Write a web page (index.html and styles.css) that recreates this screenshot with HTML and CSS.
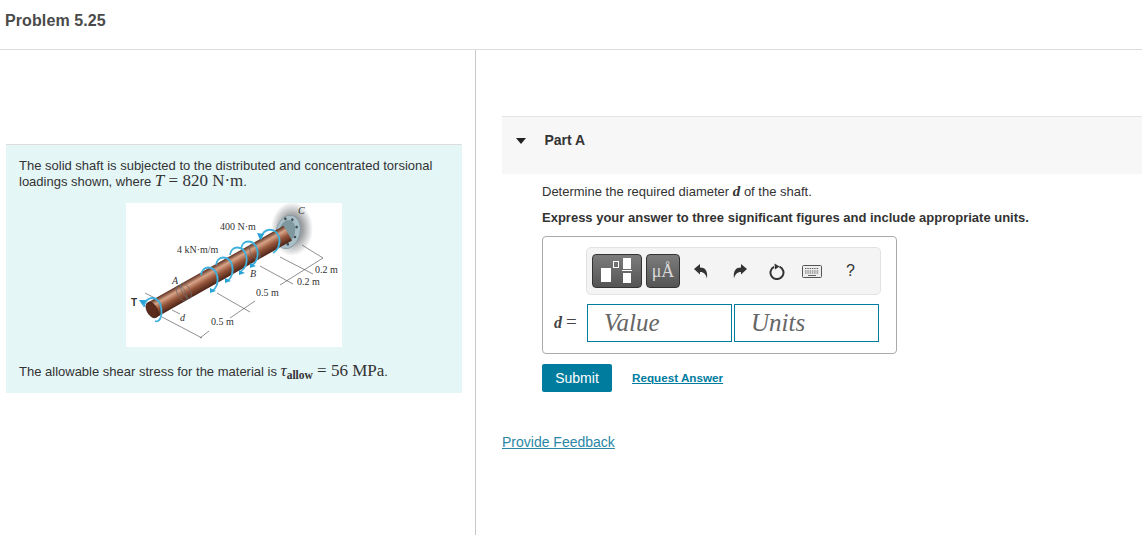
FILE: index.html
```html
<!DOCTYPE html>
<html lang="en">
<head>
<meta charset="utf-8">
<title>Problem 5.25</title>
<link rel="stylesheet" href="styles.css">
</head>
<body>
<header class="top"><h1 class="title">Problem 5.25</h1></header>
<main class="main">
  <section class="left">
    <div class="panel">
      <p class="intro">The solid shaft is subjected to the distributed and concentrated torsional loadings shown, where <span class="math"><i>T</i> = 820 N·m</span>.</p>
      <svg class="figure" width="216" height="144" viewBox="0 0 216 144">
        <defs>
          <linearGradient id="steel" x1="0" y1="0" x2="0" y2="1">
            <stop offset="0" stop-color="#5d2f20"/>
            <stop offset="0.28" stop-color="#d8a488"/>
            <stop offset="0.6" stop-color="#96553a"/>
            <stop offset="1" stop-color="#4b2317"/>
          </linearGradient>
          <radialGradient id="wall">
            <stop offset="0.5" stop-color="#9c9fa1"/>
            <stop offset="1" stop-color="#ffffff"/>
          </radialGradient>
          <path id="ring" d="M-8 -5C-7 -15 5 -15 8 -5C10 3 7 9 3 11"/>
        </defs>
        <ellipse cx="166" cy="26" rx="21" ry="27" fill="url(#wall)"/>
        <g transform="rotate(15 162 29)">
          <ellipse cx="162" cy="29" rx="12" ry="17" fill="#a9bfc8" stroke="#7d939c" stroke-width="0.7"/>
          <ellipse cx="161" cy="29" rx="8" ry="12" fill="#7f979f"/>
          <circle cx="163" cy="16" r="1.300" fill="#3d4a50"/>
          <circle cx="169" cy="22" r="1.300" fill="#3d4a50"/>
          <circle cx="170" cy="32" r="1.300" fill="#3d4a50"/>
          <circle cx="165" cy="41" r="1.300" fill="#3d4a50"/>
          <circle cx="156" cy="17" r="1.300" fill="#3d4a50"/>
        </g>
        <g class="dims">
          <path d="M36 114L76 135M74 135L83 128M104 115L129 98M154 82L197 55M91 90L124 109M134 63L167 81M154 54L187 71M176 42L197 55M19 90L29 95M46 107L54 111"/>
        </g>
        <g transform="translate(26 107) rotate(-29.5)">
          <rect x="0" y="-8.500" width="156" height="17" fill="url(#steel)"/>
          <ellipse cx="0" cy="0" rx="5" ry="8.500" fill="#5b2b1c" stroke="#3a1a10" stroke-width="0.7"/>
          <ellipse cx="34" cy="0" rx="4" ry="8.500" fill="none" stroke="#6b6b6b" stroke-width="0.7"/>
          <ellipse cx="39" cy="0" rx="4" ry="8.500" fill="none" stroke="#6b6b6b" stroke-width="0.7"/>
          <ellipse cx="118" cy="0" rx="4" ry="8.500" fill="none" stroke="#6b6b6b" stroke-width="0.7"/>
        </g>
        <g class="rings">
          <path d="M18 104C19 92 33 92 35 104C37 114 33 120 29 118"/>
          <use href="#ring" x="83" y="77"/>
          <use href="#ring" x="98" y="67"/>
          <use href="#ring" x="112" y="57"/>
          <use href="#ring" x="123" y="51"/>
          <path d="M135 36C137 24 150 24 153 34C155 42 151 48 147 50"/>
        </g>
        <g class="heads">
          <path d="M13 97l7 0-3 6zM84 85l6 3-6 2zM99 75l6 3-6 2zM113 67l6 3-6 2zM124 60l6 3-6 2zM131 30l7 1-4 6z"/>
        </g>
        <g class="labels">
          <text x="94" y="27">400 N·m</text>
          <text x="51" y="50">4 kN·m/m</text>
          <text x="172" y="11" class="ital">C</text>
          <text x="124" y="74" class="ital">B</text>
          <text x="46" y="81" class="ital">A</text>
          <text x="5" y="103" class="bold">T</text>
          <text x="54" y="118" class="ital">d</text>
          <text x="189" y="70">0.2 m</text>
          <text x="171" y="82">0.2 m</text>
          <text x="130" y="93">0.5 m</text>
          <text x="85" y="122">0.5 m</text>
        </g>
      </svg>
      <p class="allow">The allowable shear stress for the material is <span class="math"><i>τ</i><sub class="sub">allow</sub> = 56 MPa</span>.</p>
    </div>
  </section>
  <section class="right">
    <div class="part-head">
      <span class="caret"></span>
      <h2 class="part-title">Part A</h2>
    </div>
    <div class="part-body">
      <p class="q">Determine the required diameter <i class="math math-var">d</i> of the shaft.</p>
      <p class="hint">Express your answer to three significant figures and include appropriate units.</p>
      <div class="answer">
        <div class="toolbar">
          <button class="tool tool-wide" aria-label="templates">
            <svg width="32" height="28" viewBox="0 0 32 28">
              <rect x="0" y="10" width="10" height="14" fill="#fff"/>
              <rect x="12.500" y="3.500" width="5" height="6" fill="none" stroke="#fff"/>
              <rect x="22" y="0" width="8" height="11" fill="#fff"/>
              <rect x="21" y="12" width="10" height="1" fill="#fff"/>
              <rect x="22" y="15" width="8" height="10" fill="#fff"/>
            </svg>
          </button>
          <button class="tool tool-unit">μÅ</button>
          <span class="ico ico-undo"><svg width="14" height="15" viewBox="0 0 14 15"><path d="M0 5L6 0V3.500C11 3.500 14 6.500 13 14.500C12 10.500 10 8 6 8V10.500Z" fill="#333"/></svg></span>
          <span class="ico ico-redo"><svg width="14" height="15" viewBox="0 0 14 15"><path d="M14 5L8 0V3.500C3 3.500 0 6.500 1 14.500C2 10.500 4 8 8 8V10.500Z" fill="#333"/></svg></span>
          <span class="ico ico-reset"><svg width="16" height="17" viewBox="0 0 16 17"><path d="M10.500 3.600A6.500 6.500 0 1 1 5 3.800" fill="none" stroke="#333" stroke-width="2"/><path d="M5.500 0.500L10.500 3.500L6 6.500Z" fill="#333"/></svg></span>
          <span class="ico ico-keys"><svg width="20" height="13" viewBox="0 0 20 13"><rect x="0.500" y="0.500" width="19" height="12" rx="1" fill="#eee" stroke="#555"/><path d="M3 3.500H17M3 6H17M3 8H17" stroke="#666" stroke-dasharray="1.500 .8" stroke-width="1.200"/><path d="M6 10.500H14" stroke="#666"/></svg></span>
          <span class="ico ico-help">?</span>
        </div>
        <div class="entry">
          <span class="var"><i>d</i> <span class="eq">=</span></span>
          <div class="field">Value</div>
          <div class="field field-units">Units</div>
        </div>
      </div>
      <div class="actions">
        <button class="submit">Submit</button>
        <a class="request" href="#">Request Answer</a>
      </div>
    </div>
    <a class="feedback" href="#">Provide Feedback</a>
  </section>
</main>
</body>
</html>
```
FILE: styles.css
```css
* { box-sizing: border-box; }
html, body { margin: 0; padding: 0; }
body {
  width: 1142px;
  height: 535px;
  overflow: hidden;
  background: #fff;
  color: #333;
  font-family: "Liberation Sans", Arial, sans-serif;
  font-size: 13px;
}
p, h1, h2 { margin: 0; }
.top {
  height: 50px;
  border-bottom: 1px solid #ddd;
  padding: 12px 0 0 5px;
}
.title { font-size: 16px; line-height: 18px; font-weight: 700; color: #4a4a4a; letter-spacing: 0.1px; }
.main { display: flex; height: 485px; }
.left {
  width: 476px;
  border-right: 1px solid #c8c8c8;
  padding: 94px 0 0 6px;
}
.panel {
  width: 456px;
  height: 249px;
  background: #e5f6f7;
  border-top: 1px solid #ddd;
  padding: 13px 13px 0;
}
.intro { line-height: 16px; width: 430px; }
.math { font-family: "Liberation Serif", "Times New Roman", serif; font-size: 17px; line-height: 0; }
.math-var { font-size: 15px; font-weight: 700; }
.figure { display: block; margin: 13px 0 0 107px; background: #fff; }
.allow { margin-top: 17px; line-height: 16px; }
.sub { font-size: 11.500px; font-weight: 700; vertical-align: -3px; line-height: 0; }
.dims path { fill: none; stroke: #444; stroke-width: 0.6; }
.rings path, .rings use { fill: none; stroke: #3fb1dc; stroke-width: 1.800; }
.heads path { fill: #2aa3d6; }
.labels text { font-family: "Liberation Serif", serif; font-size: 10px; fill: #333; }
.labels .ital { font-style: italic; }
.labels .bold { font-weight: 700; font-family: "Liberation Sans", sans-serif; }
.right { flex: 1; padding: 66px 0 0 26px; }
.part-head {
  height: 58px;
  background: #f7f7f7;
  border-top: 1px solid #e5e5e5;
  display: flex;
  align-items: flex-start;
  padding: 15px 0 0 14px;
}
.caret {
  width: 0;
  height: 0;
  margin-top: 6px;
  border-left: 5px solid transparent;
  border-right: 5px solid transparent;
  border-top: 6px solid #222;
}
.part-title { margin-left: 18.500px; font-size: 14px; line-height: 16px; font-weight: 700; color: #333; }
.part-body { padding: 10px 0 0 40px; }
.q { line-height: 16px; }
.hint { margin-top: 10px; line-height: 16px; font-weight: 700; }
.answer {
  width: 355px;
  height: 118px;
  margin-top: 10px;
  border: 1px solid #aaa;
  border-radius: 4px;
  padding: 10px 0 0 43px;
}
.toolbar {
  width: 295px;
  height: 48px;
  background: #f4f4f4;
  border: 1px solid #e2e2e2;
  border-radius: 5px;
  display: flex;
  align-items: center;
  padding-left: 5px;
}
.tool {
  height: 34px;
  padding: 0;
  border: 1px solid #333;
  border-radius: 4px;
  background: linear-gradient(#7c7c7c, #555);
  display: flex;
  align-items: center;
  justify-content: center;
}
.tool-wide { width: 50px; }
.tool-wide svg { margin-top: 2px; }
.tool-unit {
  width: 34px;
  margin-left: 4px;
  color: #d8d8d8;
  font-family: "Liberation Serif", serif;
  font-size: 18px;
}
.ico { display: flex; align-items: center; color: #333; }
.ico-undo { margin-left: 14px; }
.ico-redo { margin-left: 25px; }
.ico-reset { margin-left: 22px; }
.ico-keys { margin-left: 17px; }
.ico-help { margin-left: 24px; font-size: 16px; }
.entry { display: flex; align-items: center; margin-top: 9px; margin-left: -43px; }
.var {
  width: 44px;
  padding-left: 11px;
  font-family: "Liberation Serif", serif;
  font-size: 16px;
  color: #444;
  white-space: nowrap;
}
.var i { font-weight: 700; }
.eq { font-size: 19px; line-height: 0; }
.field {
  width: 145px;
  height: 38px;
  border: 1px solid #007c9e;
  font-family: "Liberation Serif", serif;
  font-style: italic;
  font-size: 25px;
  line-height: 36px;
  color: #666;
  padding-left: 16px;
}
.field-units { margin-left: 2px; }
.actions { display: flex; align-items: center; margin-top: 10px; }
.submit {
  width: 70px;
  height: 28px;
  border: 0;
  border-radius: 2px;
  background: #007c9e;
  color: #fff;
  font-family: inherit;
  font-size: 14px;
}
.request { margin-left: 20px; margin-bottom: 2px; font-size: 11.700px; font-weight: 700; color: #007c9e; }
.feedback { display: inline-block; margin-top: 42px; font-size: 14px; color: #2b87a6; }
```
